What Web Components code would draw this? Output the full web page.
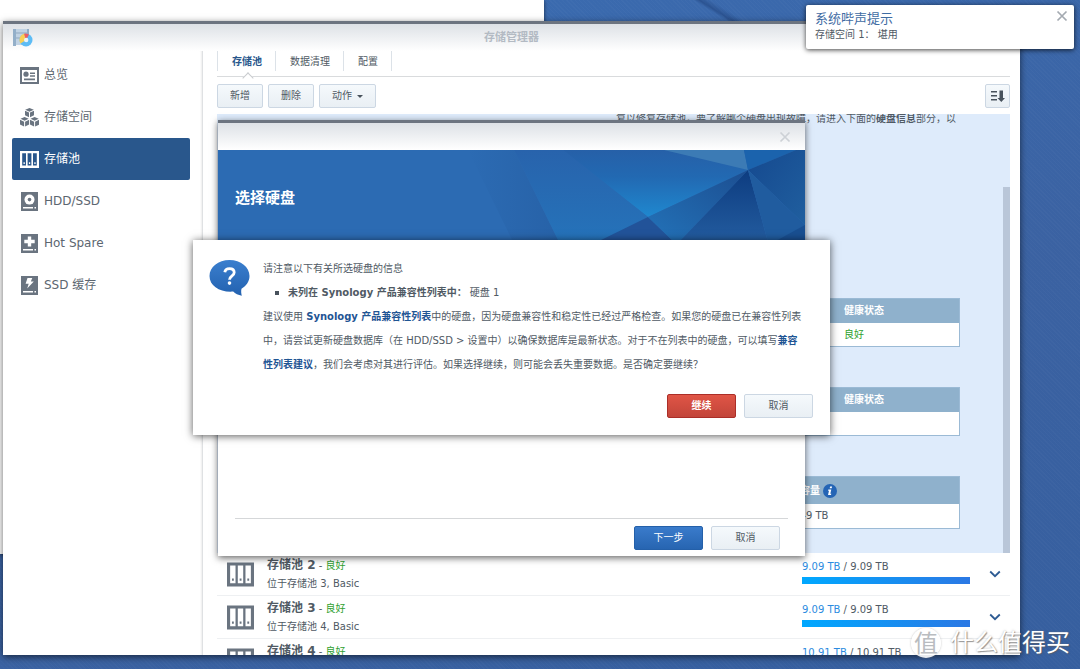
<!DOCTYPE html>
<html lang="zh-CN">
<head>
<meta charset="utf-8">
<title>存储管理器</title>
<style>
html, body { margin: 0; height: 100%; overflow: hidden; }
body {
  font: 10px/16px "DejaVu Sans", "Noto Sans CJK SC", sans-serif;
  color: #505a64;
  text-spacing-trim: space-all;
}
</style>
</head>
<body>
<nas-desktop></nas-desktop>
<script>
const define = (name, html, setup) => {
  const template = document.createElement('template');
  template.innerHTML = '<style>*{box-sizing:border-box}[hidden]{display:none}button{font:inherit;cursor:pointer}</style>' + html;
  customElements.define(name, class extends HTMLElement {
    connectedCallback() {
      if (this.shadowRoot) return;
      const root = this.attachShadow({ mode: 'open' });
      root.append(template.content.cloneNode(true));
      if (setup) setup(this, root);
    }
  });
};

const ICONS = {
  overview: '<rect x="1" y="2" width="17" height="15" fill="none" stroke="currentColor" stroke-width="2"/><path d="M0 1h19v3H0z" fill="currentColor"/><circle cx="6" cy="8.200" r="2.600" fill="currentColor"/><path d="M10 6.500h5V8h-5zM10 9.300h5v1.500h-5zM4 12.500h11v1.800H4z" fill="currentColor"/>',
  volume: '<g fill="currentColor"><path d="M9.500 0l4.300 1.800-4.300 2-4.300-2zM5 2.700l4 1.900v4.600l-4-2zM14 2.700l-4 1.900v4.600l4-2z"/><path d="M4.600 9l4.100 1.800-4.100 2-4.100-2zM0 11.800l4.100 1.900v4.800L0 16.600zM9.100 11.800l-4 1.900v4.800l4-1.900z"/><path d="M14.600 9l4.100 1.800-4.100 2-4.100-2zM10 11.800l4.100 1.900v4.800l-4.100-1.900zM19.100 11.800l-4 1.900v4.800l4-1.900z"/></g>',
  pool: '<path fill="currentColor" fill-rule="evenodd" d="M0 1h19v17H0zM2.200 3.200v12.400h3.800V3.200zM7.600 3.200v12.400h3.800V3.200zM13 3.200v12.400h3.800V3.200z"/><path fill="currentColor" d="M3.500 12.300h1.300v1.600H3.500zM8.900 12.300h1.300v1.600H8.900zM14.300 12.300h1.300v1.600h-1.300z"/>',
  disk: '<path fill="currentColor" d="M1 0h17v19H1z"/><circle cx="9.500" cy="7.600" r="5" fill="#fff"/><circle cx="9.500" cy="7.600" r="1.800" fill="currentColor"/><path fill="#fff" d="M3 15h10v1.500H3zM14.500 15H16v1.500h-1.500z"/>',
  spare: '<path fill="currentColor" d="M1 0h17v19H1z"/><path fill="#fff" d="M7.800 2.500h3.400v3.300h3.500v3.400h-3.500v3.400H7.800V9.200H4.300V5.800h3.500zM3 15h10v1.500H3zM14.500 15H16v1.500h-1.500z"/>',
  cache: '<path fill="currentColor" d="M1 0h17v19H1z"/><path fill="#fff" d="M7.500 2h4.800l-1.500 3.500h3L7.200 12.600l1.500-4.800H5.600zM3 15h10v1.500H3zM14.500 15H16v1.500h-1.500z"/>'
};

define('nas-icon', `
<style>
:host { display: block; width: 19px; height: 19px; flex: none; }
svg { display: block; width: 100%; height: 100%; }
</style><svg viewBox="0 0 19 19" aria-hidden="true"></svg>`,
(host, root) => { root.querySelector('svg').innerHTML = ICONS[host.getAttribute('name')]; });

define('nas-button', `
<style>
:host { display: block; }
button {
  display: flex; align-items: center; justify-content: center; gap: 5px;
  width: 100%; height: 24px; padding: 0 12px; white-space: nowrap;
  color: #505a64; border: 1px solid #ccd7e3; border-radius: 2px;
  background: linear-gradient(#f5f9fc, #e9eff4);
}
:host([kind="primary"]) button { color: #fff; border-color: #2460a9; background: linear-gradient(#3a7bcb, #2765b1); }
:host([kind="danger"]) button { color: #fff; font-weight: bold; border-color: #ab2e28; background: linear-gradient(#e05546, #c2453a); }
:host([icon]) button { padding: 0 4px; }
</style><button type="button"><slot></slot></button>`,
(host, root) => {
  if (host.hasAttribute('label')) root.querySelector('button').setAttribute('aria-label', host.getAttribute('label'));
});

define('nas-close', `
<style>
:host { display: block; width: 12px; height: 12px; color: #a4aab1; }
button { display: block; width: 12px; height: 12px; padding: 0; border: 0; background: none; color: inherit; }
svg { display: block; }
</style><button type="button" aria-label="关闭"><svg width="12" height="12" viewBox="0 0 12 12"><path d="M1.500 1.500l9 9M10.500 1.500l-9 9" stroke="currentColor" stroke-width="1.700"/></svg></button>`);

define('nas-nav-item', `
<style>
:host { display: block; }
a {
  display: flex; align-items: center; gap: 5px; height: 42px; padding: 0 8px;
  font-size: 12px; color: #5c6670; text-decoration: none; border-radius: 2px;
}
nas-icon { color: #6a7480; }
:host([active]) a { background: #29578c; color: #fff; }
:host([active]) nas-icon { color: #fff; }
</style><a href="#"><nas-icon></nas-icon><slot></slot></a>`,
(host, root) => {
  const icon = document.createElement('nas-icon');
  icon.setAttribute('name', host.getAttribute('icon'));
  root.querySelector('nas-icon').replaceWith(icon);
  if (host.hasAttribute('active')) root.querySelector('a').setAttribute('aria-current', 'page');
});

define('nas-tab', `
<style>
:host { display: block; border-right: 1px solid #dce2e8; height: 20px; }
button { position: relative; display: block; height: 20px; padding: 2px 13px 0 14px; border: 0; background: none; color: #505a64; }
:host([active]) button { padding-right: 13px; color: #29578c; font-weight: bold; }
:host([active]) button::after {
  content: ""; position: absolute; left: 50%; top: 23px; width: 7px; height: 7px; margin-left: -3px;
  background: #fff; border: solid #c8cbce; border-width: 1px 0 0 1px; transform: rotate(45deg);
}
</style><button type="button" role="tab"><slot></slot></button>`,
(host, root) => root.querySelector('button').setAttribute('aria-selected', host.hasAttribute('active')));

define('nas-info-table', `
<style>
:host { display: block; }
table { width: 100%; table-layout: fixed; border-collapse: separate; border-spacing: 0; background: #fff; border: 1px solid #9bbad5; }
th, td { height: 24px; padding: 0 8px; text-align: left; font-weight: normal; }
td { height: 23px; }
th { background: #8fb1cc; color: #fff; font-weight: bold; }
:host([wide]) th { height: 27px; }
:host([wide]) td { height: 24px; }
.last { width: 123px; }
:host([wide]) .last { width: 177px; }
.head { display: flex; align-items: center; gap: 3px; }
:host([good]) td { color: #2fa12f; }
svg { display: block; }
</style>
<table>
  <colgroup><col><col class="last"></colgroup>
  <thead><tr><th></th><th scope="col"><span class="head"><slot name="head"></slot></span></th></tr></thead>
  <tbody><tr><td></td><td><slot></slot></td></tr></tbody>
</table>`);

define('nas-pool-row', `
<style>
:host { display: flex; height: 43px; flex: none; align-items: center; border-bottom: 1px solid #eef0f2; padding: 0 8px 0 10px; }
nas-icon { width: 27px; height: 27px; color: #6a7480; margin-right: 13px; }
.text { flex: 1; padding-top: 1px; }
.name, .sub { line-height: 18px; }
.name strong { font-size: 12px; }
.ok { color: #2fa12f; }
.usage { width: 168px; margin-right: 18px; }
.size { line-height: 18px; }
.used { color: #2b8be0; }
.bar { height: 7px; margin: 1px 0 6px; background: linear-gradient(90deg, #00a8ff, #2b78e4); }
button { display: block; width: 14px; height: 14px; padding: 0; border: 0; background: none; }
svg { display: block; }
</style>
<nas-icon name="pool"></nas-icon>
<div class="text">
  <div class="name"><strong></strong> - <span class="ok">良好</span></div>
  <div class="sub"></div>
</div>
<div class="usage"><div class="size"><span class="used"></span> / <span class="total"></span></div><div class="bar"></div></div>
<button type="button" aria-label="展开"><svg width="14" height="14" viewBox="0 0 14 14"><path d="M2.200 4.500L7 9.200l4.800-4.700" fill="none" stroke="#2d5b93" stroke-width="1.800"/></svg></button>`,
(host, root) => {
  root.querySelector('strong').textContent = host.getAttribute('name');
  root.querySelector('.sub').textContent = host.getAttribute('sub');
  root.querySelector('.used').textContent = host.getAttribute('size');
  root.querySelector('.total').textContent = host.getAttribute('size');
});

define('nas-pool-detail', `
<style>
:host { display: flex; flex: none; background: #deebfb; }
.content { flex: 1; display: flex; flex-direction: column; gap: 40px; padding: 0 43px 24px 50px; }
p { margin: 0 4px 134px 0; text-align: right; line-height: 10px; white-space: nowrap; }
.thumb { width: 7px; margin-top: 73px; background: #b9c6d8; }
svg { display: block; }
</style>
<div class="content">
  <p>复以修复存储池，要了解哪个硬盘出现故障，请进入下面的<b>硬盘信息</b>部分，以</p>
  <nas-info-table good><span slot="head">健康状态</span>良好</nas-info-table>
  <nas-info-table><span slot="head">健康状态</span></nas-info-table>
  <nas-info-table wide><span slot="head">总容量</span><svg slot="head" width="14" height="14" viewBox="0 0 14 14" aria-hidden="true"><circle cx="7" cy="7" r="7" fill="#2565b5"/><path d="M7.100 2.500h2l-.4 1.800h-2zM5.300 5.500h3l-1 4.300h1l-.3 1.200H5l1-4.300H5z" fill="#fff"/></svg>5.49 TB</nas-info-table>
</div>
<div class="thumb"></div>`);

define('nas-window', `
<style>
:host { display: flex; flex-direction: column; background: #fff; border-top: 3px solid #6c7480; box-shadow: 0 2px 7px rgba(0,0,0,.6); }
header { display: grid; grid-template-columns: 20px 1fr 20px; align-items: center; justify-items: center; flex: none; height: 27px; padding: 0 10px; background: linear-gradient(#dde1e6, #fff); }
.title { font-size: 11px; font-weight: bold; color: #b3bac3; }
.body { flex: 1; min-height: 0; display: flex; }
</style>
<header><slot name="icon"><span></span></slot><div class="title"><slot name="title"></slot></div><slot name="tools"></slot></header>
<div class="body"><slot></slot></div>`);

define('nas-storage-manager', `
<style>
:host { display: flex; flex: 1; min-width: 0; }
nav { width: 200px; flex: none; padding: 3px 12px 0 9px; border-right: 1px solid #dfe1e3; box-shadow: inset -2px 0 2px -1px #eee; }
main { flex: 1; min-width: 0; display: flex; flex-direction: column; padding: 0 10px 0 14px; }
.tabs { display: flex; flex: none; height: 26px; border-bottom: 1px solid #d9dbdd; }
.tabs::before { content: ""; width: 1px; height: 20px; background: #dce2e8; }
.tools { display: flex; gap: 5px; margin: 7px 0 6px; }
.tools nas-button:last-child { margin-left: auto; }
.list { flex: 1; min-height: 0; display: flex; flex-direction: column; overflow: hidden; }
svg { display: block; }
</style>
<nav>
  <nas-nav-item icon="overview">总览</nas-nav-item>
  <nas-nav-item icon="volume">存储空间</nas-nav-item>
  <nas-nav-item icon="pool" active>存储池</nas-nav-item>
  <nas-nav-item icon="disk">HDD/SSD</nas-nav-item>
  <nas-nav-item icon="spare">Hot Spare</nas-nav-item>
  <nas-nav-item icon="cache">SSD 缓存</nas-nav-item>
</nav>
<main>
  <div class="tabs" role="tablist"><nas-tab active>存储池</nas-tab><nas-tab>数据清理</nas-tab><nas-tab>配置</nas-tab></div>
  <div class="tools">
    <nas-button>新增</nas-button><nas-button>删除</nas-button>
    <nas-button>动作 <svg width="6" height="3" viewBox="0 0 6 3"><path d="M0 0h6L3 3z" fill="#48525c"/></svg></nas-button>
    <nas-button icon label="排序"><svg width="15" height="14" viewBox="0 0 15 14"><path d="M1 2h6v1.600H1zM1 6h6v1.600H1zM1 10h6v1.600H1zM9.500 1.500h3.500v7.500h2l-3.700 4L7.500 9h2z" fill="#48525c"/></svg></nas-button>
  </div>
  <div class="list">
    <nas-pool-detail></nas-pool-detail>
    <nas-pool-row name="存储池 2" sub="位于存储池 3, Basic" size="9.09 TB"></nas-pool-row>
    <nas-pool-row name="存储池 3" sub="位于存储池 4, Basic" size="9.09 TB"></nas-pool-row>
    <nas-pool-row name="存储池 4" sub="位于存储池 5, Basic" size="10.91 TB"></nas-pool-row>
  </div>
</main>`);

define('nas-wizard', `
<style>
:host { display: flex; flex: 1; flex-direction: column; min-width: 0; }
.banner { display: flex; justify-content: space-between; height: 92px; background: #2c6bb3; overflow: hidden; }
h1 { margin: 0; padding: 36px 0 0 17px; font-size: 15px; line-height: 24px; color: #fff; white-space: nowrap; }
.banner svg { display: block; flex: none; }
footer { display: flex; justify-content: flex-end; gap: 8px; margin: auto 17px 0; padding: 7px 8px 6px 0; border-top: 1px solid #d5d7d9; }
footer nas-button { width: 69px; }
</style>
<div class="banner"><h1>选择硬盘</h1>
<svg width="347" height="92" viewBox="240 0 347 92" aria-hidden="true">
  <defs>
    <linearGradient id="a" x1="0" x2="1"><stop offset="0" stop-color="#2c6bb3"/><stop offset="1" stop-color="#2762a8"/></linearGradient>
    <linearGradient id="b" x1="0" y1="0" x2="0" y2="1"><stop offset="0" stop-color="#2863ac"/><stop offset="1" stop-color="#2573ba"/></linearGradient>
    <linearGradient id="d" x1="0" y1="0" x2="0" y2="1"><stop offset="0" stop-color="#2660a8"/><stop offset=".4" stop-color="#2269b2"/><stop offset="1" stop-color="#1f88cf"/></linearGradient>
    <linearGradient id="e" x1="0" y1="1" x2="1" y2="0"><stop offset="0" stop-color="#2373b9"/><stop offset="1" stop-color="#1c4e91"/></linearGradient>
    <linearGradient id="f" x1="0" y1="0" x2="0" y2="1"><stop offset="0" stop-color="#0d3c80"/><stop offset="1" stop-color="#235c9f"/></linearGradient>
    <linearGradient id="g" x1="0" x2="1" y2="1"><stop offset="0" stop-color="#15498f"/><stop offset="1" stop-color="#205f9f"/></linearGradient>
  </defs>
  <path d="M250 0h46l45 92h-46z" fill="url(#a)"/>
  <path d="M296 0h60l100 92H341z" fill="url(#b)"/>
  <path d="M345 0h185v20L430 67z" fill="url(#d)"/>
  <path d="M335 0h10l85 67-51 25z" fill="url(#b)"/>
  <path d="M446 0h80l4 20z" fill="#3c7bb5"/>
  <path d="M526 0h52l-48 20z" fill="#1b63ad"/>
  <path d="M578 0h9v75L530 20z" fill="url(#g)"/>
  <path d="M379 92l51-25 26 25z" fill="#225399"/>
  <path d="M430 67l100-47-69 72h-5z" fill="url(#e)"/>
  <path d="M530 20l20 72h-89z" fill="url(#f)"/>
  <path d="M530 20l57 55v17h-37z" fill="#205c9f"/>
  <path d="M587 75v17h-31z" fill="#194f91"/>
</svg></div>
<footer><nas-button kind="primary">下一步</nas-button><nas-button>取消</nas-button></footer>`);

define('nas-confirm', `
<style>
:host { display: flex; flex-direction: column; background: #fff; box-shadow: 0 1px 8px rgba(0,0,0,.65); padding: 17px 17px 17px 16px; }
.message { display: grid; grid-template-columns: 41px 1fr; column-gap: 13px; }
.icon { display: block; margin-top: 3px; }
.text { padding-right: 7px; line-height: 24px; }
p, ul { margin: 0; }
ul { list-style: none; padding: 0 0 0 12px; }
li { display: flex; align-items: center; gap: 9px; }
li::before { content: ""; width: 4px; height: 4px; background: #48525c; }
a { color: #1f5594; font-weight: bold; text-decoration: none; }
.actions { display: flex; justify-content: flex-end; gap: 8px; margin-top: auto; }
.actions nas-button { width: 69px; }
</style>
<div class="message">
  <svg class="icon" width="41" height="36" viewBox="0 0 41 36" aria-hidden="true">
    <defs><linearGradient id="q" x1="0" y1="0" x2="0" y2="1"><stop offset="0" stop-color="#3b7fce"/><stop offset="1" stop-color="#2362b0"/></linearGradient></defs>
    <path d="M20.500 0C31.800 0 40.500 7 40.500 16c0 5.200-3 9.800-8 12.800-.6 2.500-.3 4.800.3 6.900-3.500-.5-6.600-2-8.600-4.100C11 32.600.5 26 .5 16 .5 7 9.200 0 20.500 0z" fill="url(#q)"/>
    <path d="M15.800 12.300c.3-2.300 2-3.700 4.700-3.700 2.800 0 4.700 1.500 4.700 3.900 0 3.500-4.500 3.200-4.700 7.200" fill="none" stroke="#fff" stroke-width="2.800"/><circle cx="20.500" cy="23.100" r="1.800" fill="#fff"/>
  </svg>
  <div class="text">
    <p>请注意以下有关所选硬盘的信息</p>
    <ul><li><span><b>未列在 Synology 产品兼容性列表中：</b> 硬盘 1</span></li></ul>
    <p>建议使用 <a href="#">Synology 产品兼容性列表</a>中的硬盘，因为硬盘兼容性和稳定性已经过严格检查。如果您的硬盘已在兼容性列表中，请尝试更新硬盘数据库（在 HDD/SSD &gt; 设置中）以确保数据库是最新状态。对于不在列表中的硬盘，可以填写<a href="#">兼容性列表建议</a>，我们会考虑对其进行评估。如果选择继续，则可能会丢失重要数据。是否确定要继续？</p>
  </div>
</div>
<div class="actions"><nas-button kind="danger">继续</nas-button><nas-button>取消</nas-button></div>`);

define('nas-toast', `
<style>
:host { display: flex; justify-content: space-between; background: #fff; border-radius: 2px; box-shadow: 0 1px 5px rgba(0,0,0,.75); padding: 5px 6px 4px 9px; }
h2 { margin: 0; font-size: 13px; line-height: 17px; font-weight: normal; color: #3f6ca3; }
p { margin: 0; }
</style>
<div><h2>系统哔声提示</h2><p>存储空间 1： 堪用</p></div><nas-close></nas-close>`);

define('nas-watermark', `
<style>
:host { display: flex; align-items: center; gap: 9px; color: #fff; font-size: 24px; line-height: 32px; text-shadow: 1px 1px 1px rgba(90,90,90,.6), 0 0 2px rgba(120,120,120,.5); }
.seal { display: grid; place-items: center; width: 30px; height: 30px; border-radius: 50%; background: rgba(255,255,255,.9); color: #b9bcc0; text-shadow: none; box-shadow: 0 0 2px rgba(120,120,120,.5); }
</style><span class="seal">值</span><span>什么值得买</span>`);

define('nas-desktop', `
<style>
:host {
  display: block; position: relative; height: 100%; overflow: hidden;
  background:
    linear-gradient(32deg, transparent 49%, rgba(20,50,105,.4) 50%, transparent 52%) 535px -60px / 360px 140px no-repeat,
    repeating-linear-gradient(45deg, rgba(255,255,255,.02) 0 1px, transparent 1px 3px),
    linear-gradient(160deg, #3a6eb4, #3b62a2 60%, #365f9f);
}
.behind { position: absolute; left: 0; top: 0; width: 544px; height: 554px; background: #fff; box-shadow: 0 1px 4px rgba(0,0,0,.6); }
.main { position: absolute; left: 3px; right: 60px; top: 21px; bottom: 14px; }
.wizard { position: absolute; left: 218px; top: 120px; width: 587px; height: 436px; }
nas-confirm { position: absolute; left: 193px; top: 240px; width: 637px; height: 195px; }
nas-toast { position: absolute; right: 6px; top: 5px; width: 268px; height: 44px; }
nas-watermark { position: absolute; right: 10px; bottom: 10px; pointer-events: none; }
.wizard nas-close { color: #cdd1d6; }
svg { display: block; }
</style>
<div class="behind"></div>
<nas-window class="main">
  <svg slot="icon" width="20" height="20" viewBox="0 0 20 20" aria-hidden="true">
    <path d="M0 1h16v16H0z" fill="#c0d2e3"/><path d="M0 1h3v17H0z" fill="#93afc9"/><path d="M3 5h13M3 10h10" stroke="#8fa7bf"/><path d="M14 1h2v7h-2z" fill="#91acc6"/>
    <circle cx="13" cy="12" r="6.500" fill="#5dbcf5"/><path d="M13 12l-5.500 3.500A6.500 6.500 0 0 1 12 5.600z" fill="#f8cf55"/><path d="M13 12l-2-6.200a6.500 6.500 0 0 1 5 .8z" fill="#ea5d66"/><circle cx="13.200" cy="12" r="2.200" fill="#eaf3fa"/>
  </svg>
  <span slot="title">存储管理器</span>
  <nas-storage-manager></nas-storage-manager>
</nas-window>
<nas-window class="wizard"><nas-close slot="tools"></nas-close><nas-wizard></nas-wizard></nas-window>
<nas-confirm role="alertdialog"></nas-confirm>
<nas-toast role="status"></nas-toast>
<nas-watermark></nas-watermark>`);
</script>
</body>
</html>
